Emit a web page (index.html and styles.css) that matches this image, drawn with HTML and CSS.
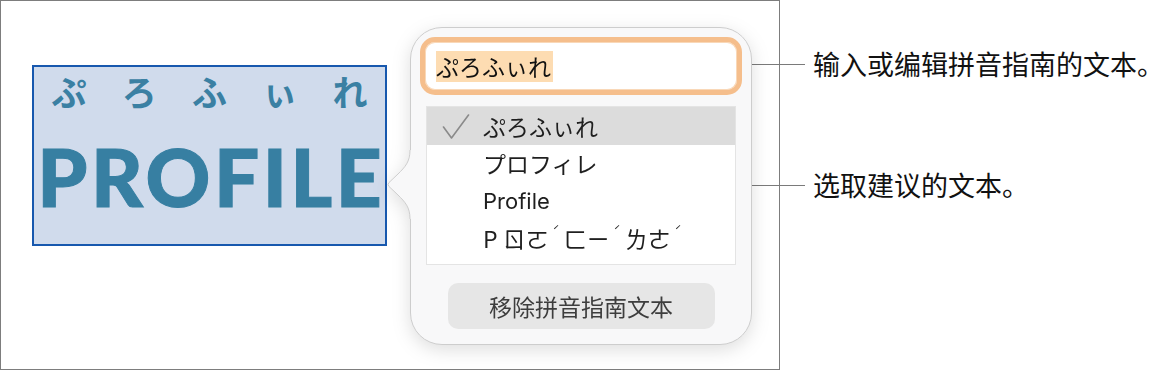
FILE: index.html
```html
<!DOCTYPE html>
<html lang="zh">
<head>
<meta charset="utf-8">
<title>拼音指南</title>
<link rel="stylesheet" href="styles.css">
</head>
<body>
<div class="page">
  <div class="frame">
    <div class="sel">
      <div class="ruby"><span>ぷ</span><span>ろ</span><span>ふ</span><span>ぃ</span><span>れ</span></div>
      <div class="word">PROFILE</div>
    </div>
    <div class="popover">
      <svg class="arrow" width="24" height="69" viewBox="0 0 24 69">
        <path d="M23 0 C23 12 18 17 11 24 L2 32.5 Q0 34.5 2 36.5 L11 45 C18 52 23 57 23 69 L25 69 L25 0 Z" fill="#f8f8f9"/>
        <path d="M23 0 C23 12 18 17 11 24 L2 32.5 Q0 34.5 2 36.5 L11 45 C18 52 23 57 23 69" fill="none" stroke="#cdcdcd" stroke-width="1"/>
      </svg>
      <div class="field"><span class="hl">ぷろふぃれ</span></div>
      <ul class="list">
        <li class="on"><svg class="check" width="28" height="26" viewBox="0 0 28 26"><path d="M1.5 13 L9.5 24 L26.5 1" fill="none" stroke="#8a8a8a" stroke-width="1.6" stroke-linecap="round" stroke-linejoin="round"/></svg><span>ぷろふぃれ</span></li>
        <li><span>プロフィレ</span></li>
        <li><span class="latin">Profile</span></li>
        <li><span class="bpmf">P ㄖㄛ<b class="tone">ˊ</b>ㄈㄧ<b class="tone">ˊ</b>ㄌㄜ<b class="tone">ˊ</b></span></li>
      </ul>
      <div class="btn">移除拼音指南文本</div>
    </div>
  </div>
  <div class="notes">
    <div class="note n1"><i class="line"></i><span>输入或编辑拼音指南的文本。</span></div>
    <div class="note n2"><i class="line"></i><span>选取建议的文本。</span></div>
  </div>
</div>
</body>
</html>
```

FILE: styles.css
```css
* { box-sizing: border-box; }
html, body { margin: 0; padding: 0; background: #ffffff; }
body { font-family: "Noto Sans CJK SC", "Noto Sans", sans-serif; color: #1d1d1d; }

.page {
  display: flex;
  align-items: flex-start;
  width: 1173px;
  height: 372px;
}

.frame {
  flex: none;
  width: 780px;
  height: 370px;
  border: 1px solid #7d7d7d;
  display: flex;
  align-items: flex-start;
  padding-left: 31px;
}

/* selected ruby text on the canvas */
.sel {
  flex: none;
  margin-top: 64px;
  width: 355px;
  height: 181px;
  background: #d0dbec;
  border: 2px solid #1758ae;
  display: flex;
  flex-direction: column;
  align-items: center;
}
.ruby {
  display: grid;
  grid-template-columns: repeat(5, 1fr);
  width: 100%;
  margin-top: 7px;
  color: #3a80a3;
  font-family: "Noto Sans CJK JP", sans-serif;
  font-weight: 700;
  font-size: 35px;
  line-height: 34px;
  text-align: center;
}
.word {
  margin-top: 28px;
  padding-left: 3.5px;
  font-family: "Lato", "Open Sans", sans-serif;
  font-weight: 900;
  font-size: 80px;
  line-height: 81px;
  color: #377fa2;
  letter-spacing: 3.5px;
  -webkit-text-stroke: 1px #377fa2;
}

/* popover */
.popover {
  flex: none;
  position: relative;
  margin-left: 23px;
  margin-top: 26px;
  width: 342px;
  height: 318px;
  background: #f8f8f9;
  border: 1px solid #cdcdcd;
  border-radius: 32px;
  padding: 9px 9px 0;
  display: flex;
  flex-direction: column;
  align-items: stretch;
  filter: drop-shadow(0 5px 9px rgba(0,0,0,0.13));
}
.arrow {
  position: absolute;
  left: -24px;
  top: 122px;
}

.field {
  height: 58px;
  border: 5px solid #f5be8c;
  border-radius: 15px;
  background: #ffffff;
  display: flex;
  align-items: center;
  padding-left: 11px;
  box-shadow: inset 0 0 0 1px #f9d8b8;
}
.hl {
  background: #fddcb2;
  font-family: "Noto Sans CJK JP", sans-serif;
  font-size: 23px;
  line-height: 31px;
  color: #111;
  padding-right: 2px;
}

.list {
  list-style: none;
  margin: 11px 6px 0;
  padding: 0 0 7px;
  background: #ffffff;
  border: 1px solid #e4e4e4;
  font-family: "Noto Sans CJK JP", sans-serif;
  font-size: 23px;
  color: #1f1f1f;
}
.list li {
  height: 37.5px;
  display: flex;
  align-items: center;
  padding-left: 56px;
  position: relative;
}
.list li.on { background: #dcdcdc; }
.check {
  position: absolute;
  left: 15px;
  top: 7px;
}
.latin {
  font-family: "Inter", "Noto Sans", sans-serif;
  font-size: 22px;
}
.bpmf {
  font-family: "Noto Sans CJK TC", sans-serif;
  white-space: nowrap;
}
.tone {
  display: inline-block;
  width: 15px;
  font-weight: 400;
  font-size: 12px;
  line-height: 12px;
  text-align: center;
  vertical-align: 12px;
}

.btn {
  margin: 18px auto 0;
  width: 267px;
  height: 46px;
  border-radius: 10px;
  background: #e6e6e6;
  color: #3d3d3d;
  font-size: 23px;
  display: flex;
  align-items: center;
  justify-content: center;
}

/* callouts */
.notes {
  flex: none;
  margin-left: -44px;
  display: flex;
  flex-direction: column;
}
.note {
  display: flex;
  align-items: center;
  height: 32px;
}
.note .line {
  display: block;
  height: 1px;
  background: #7a7a7a;
  margin-right: 8px;
}
.n1 { margin-top: 48px; }
.n1 .line { width: 63px; margin-left: 6px; }
.n2 { margin-top: 89px; }
.n2 .line { width: 69px; }
.note span {
  font-size: 27px;
  line-height: 32px;
  color: #111;
  white-space: nowrap;
}
```
